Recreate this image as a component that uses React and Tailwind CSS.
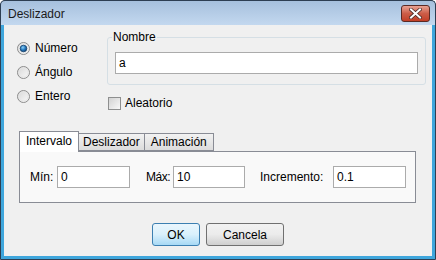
import React from "react";

function Radio({ checked }) {
  return (
    <svg width="13" height="13" viewBox="0 0 13 13" className="shrink-0">
      <defs>
        <linearGradient id="rbg" x1="0" y1="0" x2="1" y2="1">
          <stop offset="0" stopColor="#d6d6d6" />
          <stop offset="1" stopColor="#fbfbfb" />
        </linearGradient>
        <radialGradient id="rdot" cx="0.4" cy="0.35" r="0.7">
          <stop offset="0" stopColor="#8fd0f5" />
          <stop offset="0.5" stopColor="#2a7fc4" />
          <stop offset="1" stopColor="#0d3c6e" />
        </radialGradient>
      </defs>
      <circle cx="6.5" cy="6.5" r="6" fill="url(#rbg)" stroke="#8c8c8c" strokeWidth="1" />
      <circle cx="6.5" cy="6.5" r="4.6" fill="none" stroke="#e6e6e6" strokeWidth="1" />
      {checked && <circle cx="6.5" cy="6.5" r="3.3" fill="url(#rdot)" stroke="#15426f" strokeWidth="0.8" />}
    </svg>
  );
}

function Field({ value, w }) {
  return (
    <div className={`h-[22px] ${w} bg-white border border-[#ababab] flex items-center pl-[3px] text-[12px] text-black`}>
      {value}
    </div>
  );
}

export default function App() {
  return (
    <div className="w-[436px] h-[260px] bg-white font-['Liberation_Sans',Arial,sans-serif] text-[12px] text-black leading-[14px]">
      <div className="w-[436px] h-[260px] flex flex-col rounded-t-[6px] border border-[#2d3e52] bg-[#3fa6dc]">
        {/* Title bar */}
        <div className="h-[25px] shrink-0 flex items-center justify-between rounded-t-[5px] bg-gradient-to-b from-[#a6c0dd] to-[#c3d8ef] pl-[7px] pr-[5px] -mx-px -mt-px border-t border-x border-[#2d3e52]">
          <span className="text-[12px] text-[#1a1a1a] mt-[2px]">Deslizador</span>
          <div className="w-[29px] h-[17px] mt-[1px] rounded-[3px] border border-[#5a2a24] bg-gradient-to-b from-[#e8a293] via-[#cc5d48] to-[#c23e26] flex items-center justify-center">
            <svg width="13" height="11" viewBox="0 0 13 11">
              <path d="M2 1.5 L11 9.5 M11 1.5 L2 9.5" stroke="#4a2a26" strokeWidth="3.6" strokeLinecap="square" />
              <path d="M2 1.5 L11 9.5 M11 1.5 L2 9.5" stroke="#ffffff" strokeWidth="2" strokeLinecap="square" />
            </svg>
          </div>
        </div>
        {/* Client */}
        <div className="flex-1 mx-[3px] mb-[3px] bg-[#f0f0f0] flex flex-col">
          <div className="flex pt-[5px]">
            <div className="w-[103px] pl-[13px] pt-[6px] flex flex-col">
              {[["Número", true], ["Ángulo", false], ["Entero", false]].map(([t, c]) => (
                <div key={t} className="h-[24px] flex items-center gap-[5px]">
                  <Radio checked={c} />
                  <span>{t}</span>
                </div>
              ))}
            </div>
            <div className="flex-1 pr-[6px] flex flex-col">
              <fieldset className="m-0 border border-[#d5dfe5] rounded-[3px] pl-[4px] pr-[7px] pt-[8px] pb-[10px]">
                <legend className="px-[1px]">Nombre</legend>
                <div className="ml-[3px]">
                  <Field value="a" w="w-full" />
                </div>
              </fieldset>
              <div className="mt-[11px] flex items-center gap-[4px] ml-[1px]">
                <div className="w-[13px] h-[13px] border border-[#8e8f8f] bg-gradient-to-br from-[#d2d2d2] to-[#f9f9f9]" />
                <span>Aleatorio</span>
              </div>
            </div>
          </div>
          {/* Tabs */}
          <div className="mt-[21px] ml-[15px] mr-[16px] flex flex-col">
            <div className="flex items-end h-[20px]">
              <div className="h-[21px] -mb-px z-10 px-[6px] flex items-center bg-white border border-b-0 border-[#898c95] pb-[2px]">
                Intervalo
              </div>
              <div className="h-[18px] px-[4px] flex items-center border border-l-0 border-[#898c95] bg-gradient-to-b from-[#f2f2f2] to-[#dcdcdc]">
                Deslizador
              </div>
              <div className="h-[18px] px-[6px] flex items-center border border-l-0 border-[#898c95] bg-gradient-to-b from-[#f2f2f2] to-[#dcdcdc]">
                Animación
              </div>
            </div>
            <div className="h-[52px] border border-[#898c95] bg-[#f9f9f9] flex items-start pt-[14px] pl-[10px]">
              <div className="flex items-center">
                <span className="w-[27px]">Mín:</span>
                <Field value="0" w="w-[73px]" />
                <span className="ml-[16px] w-[27px] tracking-[-0.5px]">Máx:</span>
                <Field value="10" w="w-[72px]" />
                <span className="ml-[15px] w-[73px]">Incremento:</span>
                <Field value="0.1" w="w-[73px]" />
              </div>
            </div>
          </div>
          {/* Buttons */}
          <div className="mt-auto mb-[10px] flex justify-center gap-[6px]">
            <div className="w-[48px] h-[23px] rounded-[3px] border border-[#3c7fb1] bg-gradient-to-b from-[#eaf6fd] via-[#d9f0fc] to-[#a7d9f5] flex items-center justify-center">
              OK
            </div>
            <div className="w-[78px] h-[23px] rounded-[3px] border border-[#707070] bg-gradient-to-b from-[#f2f2f2] via-[#ebebeb] to-[#cfcfcf] flex items-center justify-center">
              Cancela
            </div>
          </div>
        </div>
      </div>
    </div>
  );
}
